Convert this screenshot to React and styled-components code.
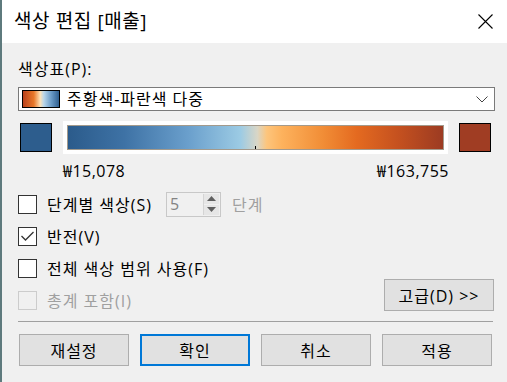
import React from 'react';
import styled, { createGlobalStyle } from 'styled-components';

const GlobalStyle = createGlobalStyle`
  html, body {
    margin: 0;
    padding: 0;
    background: #f0f0f0;
  }
  body {
    font-family: "Open Sans", "Noto Sans CJK KR", sans-serif;
    color: #000;
    letter-spacing: 1px;
  }
`;

const Window = styled('div')`
  box-sizing: border-box;
  width: 507px;
  height: 382px;
  border-left: 2px solid #5e7a7d;
  background: #f0f0f0;
  overflow: hidden;
`;

const TitleBar = styled('div')`
  height: 43px;
  background: #fff;
  display: flex;
  align-items: center;
  justify-content: space-between;
  padding: 0 14px 0 12px;
`;

const Title = styled('div')`
  font-size: 19px;
  line-height: 22px;
  letter-spacing: 0.6px;
  margin-top: -1px;
`;

const Body = styled('div')`
  padding: 16px 12px 0 16px;
  display: flex;
  flex-direction: column;
`;

const Label = styled('div')`
  font-size: 16px;
  line-height: 20px;
  height: 20px;
`;

const Select = styled('div')`
  margin-top: 8px;
  box-sizing: border-box;
  height: 24px;
  border: 1px solid #7a7a7a;
  background: #fff;
  display: flex;
  align-items: center;
  padding: 0 6px 0 3px;
  gap: 7px;
  font-size: 16px;
`;

const MiniRamp = styled('div')`
  box-sizing: border-box;
  width: 38px;
  height: 18px;
  border: 1px solid #000;
  background: linear-gradient(
    to right,
    #b9401b 0%,
    #e8782a 30%,
    #fde2b8 48%,
    #b9d6ea 58%,
    #6d9dc8 78%,
    #2f5f8f 100%
  );
`;

const SelectText = styled('span')`
  flex: 1;
  line-height: 20px;
`;

const RampRow = styled('div')`
  margin-top: 10px;
  display: flex;
  align-items: center;
  gap: 11px;
  padding-left: 2px;
`;

const Swatch = styled('div')`
  box-sizing: border-box;
  width: 32px;
  height: 29px;
  border: 1px solid #000;
  background: ${p => p.color};
`;

const RampFrame = styled('div')`
  box-sizing: border-box;
  width: 385px;
  height: 33px;
  padding: 4px;
  background: #fff;
`;

const Ramp = styled('div')`
  position: relative;
  box-sizing: border-box;
  height: 25px;
  border: 1px solid #a39a8c;
  background: linear-gradient(
    to right,
    #2b5b8b 0%,
    #3e72a5 15%,
    #6a9fcc 32%,
    #9ccbe4 46%,
    #d9d6c6 50.5%,
    #fdc57c 53%,
    #fdb25d 57%,
    #f18d36 68%,
    #e46a20 77%,
    #c5511f 88%,
    #9c3b22 100%
  );
`;

const Tick = styled('div')`
  position: absolute;
  left: 187px;
  bottom: 0;
  width: 1px;
  height: 3px;
  background: #000;
`;

const ValueRow = styled('div')`
  margin-top: 9px;
  box-sizing: border-box;
  width: 431px;
  padding-left: 45px;
  display: flex;
  justify-content: space-between;
  font-size: 16px;
  line-height: 16px;
  letter-spacing: 0.5px;
`;

const Options = styled('div')`
  margin-top: 9px;
  display: flex;
  flex-direction: column;
`;

const OptionRow = styled('div')`
  height: 32px;
  display: flex;
  align-items: center;
  font-size: 16px;
  color: ${p => (p.disabled ? '#a0a0a0' : '#000')};
`;

const Box = styled('div')`
  box-sizing: border-box;
  width: 19px;
  height: 19px;
  border: 1px solid ${p => (p.disabled ? '#cccccc' : '#333')};
  background: ${p => (p.disabled ? '#f0f0f0' : '#fff')};
  margin-right: 10px;
  display: flex;
  align-items: center;
  justify-content: center;
`;

const Spinner = styled('div')`
  box-sizing: border-box;
  margin-left: 14px;
  width: 55px;
  height: 25px;
  border: 1px solid #c8c8c8;
  display: flex;
  align-items: stretch;
`;

const SpinValue = styled('div')`
  flex: 1;
  padding-left: 3px;
  color: #838383;
  line-height: 22px;
`;

const SpinButtons = styled('div')`
  width: 15px;
  margin: 1px 1px 1px 0;
  display: flex;
  flex-direction: column;
  border-left: 1px solid #d4d4d4;
`;

const SpinHalf = styled('div')`
  flex: 1;
  background: #e6e6e6;
  display: flex;
  align-items: center;
  justify-content: center;
  & + & {
    border-top: 1px solid #f0f0f0;
  }
`;

const StepUnit = styled('span')`
  margin-left: 11px;
  color: #a0a0a0;
`;

const Spacer = styled('div')`
  flex: 1;
`;

const Button = styled('div')`
  box-sizing: border-box;
  width: 110px;
  height: 32px;
  display: flex;
  align-items: center;
  justify-content: center;
  background: #e1e1e1;
  border: ${p => (p.primary ? '2px solid #0078d7' : '1px solid #adadad')};
  font-size: 16px;
  color: #000;
`;

const AdvancedButton = styled(Button)`
  margin-bottom: 10px;
  margin-right: 1px;
`;

const Separator = styled('div')`
  margin-top: 5px;
  height: 1px;
  background: #a0a0a0;
  width: 475px;
`;

const ButtonRow = styled('div')`
  margin-top: 12px;
  display: flex;
  gap: 11px;
  padding-left: 1px;
`;

const Check = () => (
  <svg width="15" height="12" viewBox="0 0 15 12">
    <polyline points="1.5,6 5.5,10 13.5,2" fill="none" stroke="#333" strokeWidth="1.3" />
  </svg>
);

const Arrow = ({ up }) => (
  <svg width="9" height="5" viewBox="0 0 9 5">
    <polygon points={up ? '0,5 9,5 4.5,0' : '0,0 9,0 4.5,5'} fill="#5f5f5f" />
  </svg>
);

const Option = ({ label, checked, disabled, children }) => (
  <OptionRow disabled={disabled}>
    <Box disabled={disabled}>{checked && <Check />}</Box>
    <span>{label}</span>
    {children}
  </OptionRow>
);

export default function App () {
  return (
    <>
      <GlobalStyle />
      <Window>
        <TitleBar>
          <Title>색상 편집 [매출]</Title>
          <svg width="15" height="15" viewBox="0 0 15 15">
            <path d="M0.5 0.5 L14.5 14.5 M14.5 0.5 L0.5 14.5" stroke="#000" strokeWidth="1.1" />
          </svg>
        </TitleBar>
        <Body>
          <Label>색상표(P):</Label>
          <Select>
            <MiniRamp />
            <SelectText>주황색-파란색 다중</SelectText>
            <svg width="12" height="7" viewBox="0 0 12 7">
              <polyline points="0.5,0.5 6,6 11.5,0.5" fill="none" stroke="#444" strokeWidth="1" />
            </svg>
          </Select>
          <RampRow>
            <Swatch color="#2d5d8d" />
            <RampFrame>
              <Ramp>
                <Tick />
              </Ramp>
            </RampFrame>
            <Swatch color="#a03d23" />
          </RampRow>
          <ValueRow>
            <span>₩15,078</span>
            <span>₩163,755</span>
          </ValueRow>
          <Options>
            <Option label="단계별 색상(S)">
              <Spinner>
                <SpinValue>5</SpinValue>
                <SpinButtons>
                  <SpinHalf><Arrow up /></SpinHalf>
                  <SpinHalf><Arrow /></SpinHalf>
                </SpinButtons>
              </Spinner>
              <StepUnit>단계</StepUnit>
            </Option>
            <Option label="반전(V)" checked />
            <Option label="전체 색상 범위 사용(F)" />
            <Option label="총계 포함(I)" disabled>
              <Spacer />
              <AdvancedButton>고급(D) &gt;&gt;</AdvancedButton>
            </Option>
          </Options>
          <Separator />
          <ButtonRow>
            <Button>재설정</Button>
            <Button primary>확인</Button>
            <Button>취소</Button>
            <Button>적용</Button>
          </ButtonRow>
        </Body>
      </Window>
    </>
  );
}
